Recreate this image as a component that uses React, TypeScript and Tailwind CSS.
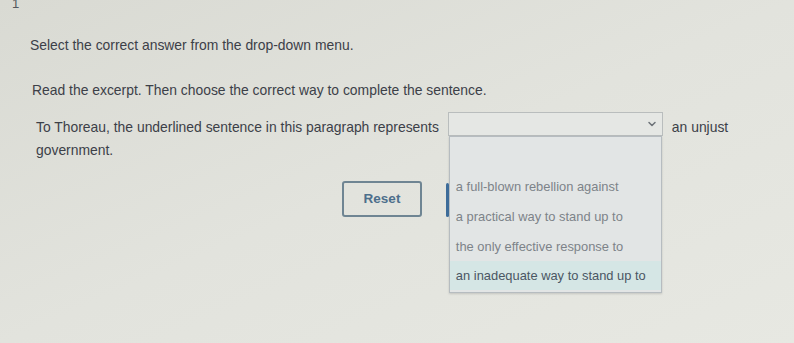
import { ChevronDown } from 'lucide-react';

const options = [
  'a full-blown rebellion against',
  'a practical way to stand up to',
  'the only effective response to',
  'an inadequate way to stand up to',
];

export default function App() {
  return (
    <div
      className="flex flex-col w-[794px] h-[343px] overflow-hidden bg-gradient-to-br from-[#d9dad3] via-[#e2e3dd] to-[#e7e8e2] text-[#3c4048]"
      style={{ fontFamily: '"Liberation Sans", Arial, sans-serif' }}
    >
      <div className="pl-[12px] -mt-[3px] text-[13px] leading-[14px] text-[#55585e]">1</div>

      <div className="pl-[30px] pt-[25px] text-[13.9px] leading-[18px]">
        Select the correct answer from the drop-down menu.
      </div>

      <div className="pl-[32px] pt-[27px] text-[13.9px] leading-[18px]">
        Read the excerpt. Then choose the correct way to complete the sentence.
      </div>

      <div className="pl-[36px] pr-[20px] pt-[13px] text-[13.9px] leading-[23px]">
        To Thoreau, the underlined sentence in this paragraph represents
        <span className="relative inline-block align-[-4px] ml-[9px] mr-[9px] w-[215px] h-[24px] border border-[#b9bdbd] bg-[#e5e7e4]">
          <ChevronDown className="absolute right-[4px] top-[5px] w-[12px] h-[12px] text-[#6d7278]" strokeWidth={3} />
          <span className="absolute left-0 top-[23px] flex flex-col w-[213px] h-[157px] border border-[#b6bcc0] bg-[#e2e5e5] pt-[34px] shadow-[0_1px_2px_rgba(0,0,0,0.15)]">
            <span className="absolute -left-[4px] top-[46px] w-[3px] h-[34px] rounded-sm bg-[#3d6c99]" />
            {options.map((opt, i) => (
              <span
                key={opt}
                className={
                  i === 3
                    ? 'flex items-center h-[29px] pl-[6px] text-[12.9px] text-[#4a5663] bg-[#d5e6e5]'
                    : 'flex items-center h-[30px] pl-[6px] text-[12.9px] text-[#7d8389]'
                }
              >
                {opt}
              </span>
            ))}
          </span>
        </span>
        an unjust government.
      </div>

      <div className="flex pl-[342px] pt-[19px]">
        <button className="w-[80px] h-[36px] rounded-[3px] border-2 border-[#6f8593] text-[13.5px] font-bold text-[#4d6f8c] bg-transparent">
          Reset
        </button>
      </div>
    </div>
  );
}
